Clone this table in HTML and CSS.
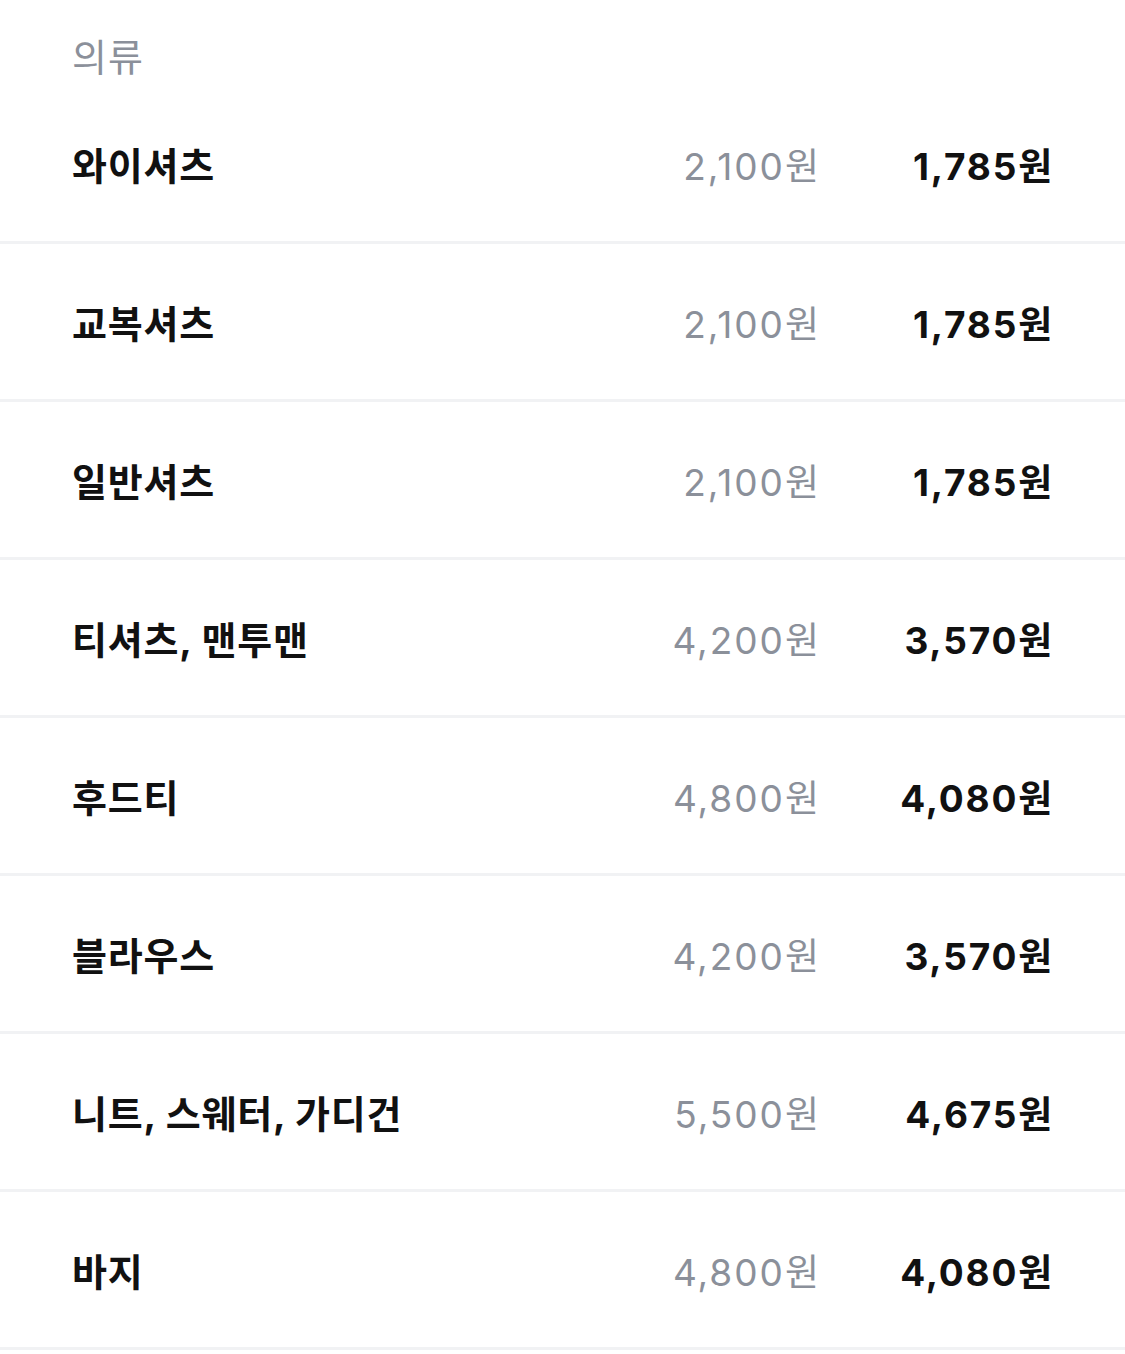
FILE: index.html
```html
<!DOCTYPE html>
<html lang="ko">
<head>
<meta charset="utf-8">
<link rel="stylesheet" href="styles.css">
</head>
<body>
<div class="page">
  <div class="section-title">의류</div>
  <ul class="list">
    <li class="row"><span class="name">와이셔츠</span><span class="orig">2,100원</span><span class="price">1,785원</span></li>
    <li class="row"><span class="name">교복셔츠</span><span class="orig">2,100원</span><span class="price">1,785원</span></li>
    <li class="row"><span class="name">일반셔츠</span><span class="orig">2,100원</span><span class="price">1,785원</span></li>
    <li class="row"><span class="name">티셔츠, 맨투맨</span><span class="orig">4,200원</span><span class="price">3,570원</span></li>
    <li class="row"><span class="name">후드티</span><span class="orig">4,800원</span><span class="price">4,080원</span></li>
    <li class="row"><span class="name">블라우스</span><span class="orig">4,200원</span><span class="price">3,570원</span></li>
    <li class="row"><span class="name">니트, 스웨터, 가디건</span><span class="orig">5,500원</span><span class="price">4,675원</span></li>
    <li class="row"><span class="name">바지</span><span class="orig">4,800원</span><span class="price">4,080원</span></li>
  </ul>
</div>
</body>
</html>
```
FILE: styles.css
```css
html, body {
  margin: 0;
  padding: 0;
  background: #ffffff;
}
body {
  font-family: "Inter", "Noto Sans CJK KR", "Noto Sans", sans-serif;
  color: #111111;
}
.page {
  width: 1125px;
}
.section-title {
  height: 86px;
  box-sizing: border-box;
  padding: 32px 0 0 72px;
  font-size: 38px;
  line-height: 50px;
  letter-spacing: 1px;
  color: #8b909a;
  font-weight: 400;
}
.list {
  list-style: none;
  margin: 0;
  padding: 0;
}
.row {
  display: flex;
  align-items: center;
  height: 155px;
  border-bottom: 3px solid #f1f2f4;
  padding: 0 71px 0 72px;
}
.name {
  flex: 1;
  font-size: 38px;
  font-weight: 700;
  color: #111;
  letter-spacing: 0.8px;
}
.orig {
  font-size: 37px;
  font-weight: 400;
  color: #8b909a;
  letter-spacing: 2px;
}
.price {
  width: 233px;
  text-align: right;
  font-size: 37px;
  font-weight: 700;
  color: #111;
  letter-spacing: 1.8px;
}
```
